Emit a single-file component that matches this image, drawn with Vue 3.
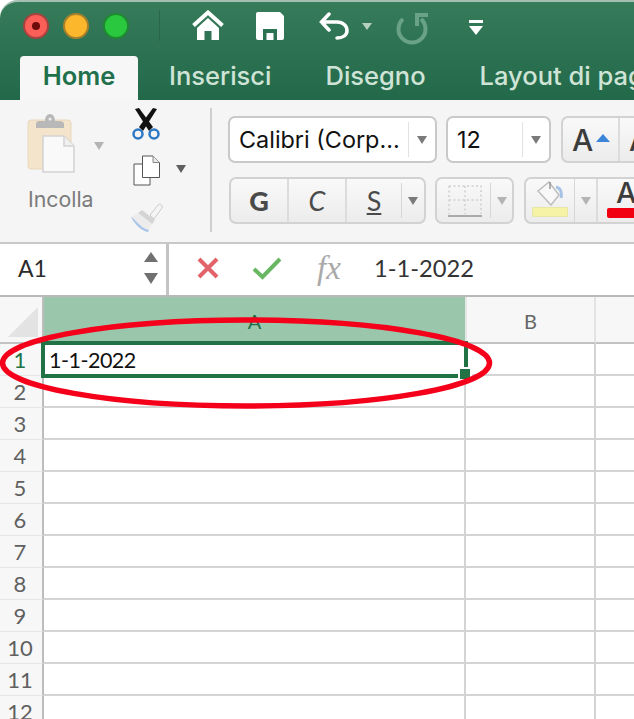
<script setup>
const rows = [1, 2, 3, 4, 5, 6, 7, 8, 9, 10, 11, 12]
</script>

<template>
  <div class="app">
    <header class="titlebar">
      <div class="quick">
        <span class="light red"><i></i></span>
        <span class="light yellow"></span>
        <span class="light green"></span>
        <span class="qsep"></span>
        <svg class="q-home" width="32" height="30" viewBox="0 0 32 30">
          <path d="M1.5 15.500 16 2.500 30.500 15.500" fill="none" stroke="#fff" stroke-width="4" />
          <path d="M5 18 16 8 27 18V30H19.500V21H12.500V30H5Z" fill="#fff" />
        </svg>
        <svg class="q-save" width="28" height="28" viewBox="0 0 28 28">
          <path d="M2 0H24L28 4V26a2 2 0 0 1-2 2H2a2 2 0 0 1-2-2V2a2 2 0 0 1 2-2Z" fill="#fff" />
          <rect x="7" y="17" width="14" height="11" fill="#2b7350" />
          <rect x="10.500" y="21" width="7" height="7" fill="#fff" />
        </svg>
        <svg class="q-undo" width="31" height="29" viewBox="0 0 31 29">
          <path d="M10 2 2.500 10 10 18M2.500 10H18C24 10 28 14 28 18.500 28 23 24 26 18 26" fill="none" stroke="#fff" stroke-width="3.500" stroke-linecap="round" />
        </svg>
        <span class="q-caret"></span>
        <svg class="q-redo" width="36" height="34" viewBox="0 0 36 34">
          <path d="M7 8A13.500 13.500 0 1 0 25 8" fill="none" stroke="#69a286" stroke-width="4" />
          <path d="M32 4H21V15" fill="none" stroke="#69a286" stroke-width="4" />
        </svg>
        <svg class="q-more" width="14" height="15" viewBox="0 0 14 15">
          <rect width="14" height="3" fill="#fff" />
          <path d="M0 6H14L7 15Z" fill="#fff" />
        </svg>
      </div>
      <nav class="tabs">
        <span class="tab active">Home</span>
        <span class="tab t2">Inserisci</span>
        <span class="tab t3">Disegno</span>
        <span class="tab t4">Layout di pagina</span>
      </nav>
    </header>

    <section class="ribbon">
      <div class="paste">
        <div class="paste-top">
          <svg width="50" height="60" viewBox="0 0 50 60">
            <rect x="1" y="7" width="43" height="49" rx="3" fill="#f4e4cb" stroke="#e8d8bd" />
            <path d="M9 15V11C9 8 12 8 14 8H18C18 4 20 1 23 1S28 4 28 8H32C35 8 37 9 37 11V15Z" fill="#b8b8b8" />
            <circle cx="23" cy="6" r="1.500" fill="#eee" />
            <path d="M16 23H37L47 33V59H16Z" fill="#f9f9f9" stroke="#d2d2d2" stroke-width="1.500" />
            <path d="M37 23V33H47" fill="#f0f0f0" stroke="#d2d2d2" stroke-width="1.500" />
          </svg>
          <span class="caret light-caret paste-caret"></span>
        </div>
        <span class="paste-label">Incolla</span>
      </div>

      <div class="tools">
        <svg class="scissors" width="32" height="34" viewBox="0 0 32 34">
          <path d="M5 1 9 0 23 19 19 23Z" fill="#111" />
          <path d="M27 1 23 0 9 19 13 23Z" fill="#111" />
          <circle cx="8" cy="26" r="4.500" fill="none" stroke="#2f78c4" stroke-width="2.500" />
          <circle cx="24" cy="26" r="4.500" fill="none" stroke="#2f78c4" stroke-width="2.500" />
        </svg>
        <div class="copy-row">
          <svg width="28" height="31" viewBox="0 0 28 31">
            <path d="M1 9H17V30H1Z" fill="#fff" stroke="#555" stroke-width="1" />
            <path d="M9.500 1H20L26.500 7.500V22.500H9.500Z" fill="#fff" stroke="#555" stroke-width="1" />
            <path d="M20 1V7.500H26.500" fill="#e8e8e8" stroke="#888" stroke-width="1" />
          </svg>
          <span class="caret dark-caret"></span>
        </div>
        <svg class="brush" width="34" height="32" viewBox="0 0 34 32">
          <path d="M20 13 28 3C30 1 33 3 32 6L24 17Z" fill="#f4f4f4" stroke="#ccc" />
          <path d="M12 8 25 18 22 22 8 11Z" fill="#d4d4d4" />
          <path d="M8 11 22 22 18 30C12 28 5 22 1 15Z" fill="#ececec" />
          <path d="M4 17C9 23 14 27 19 28L18 30C12 29 5 23 1 15Z" fill="#a9c6ea" />
        </svg>
      </div>

      <div class="rsep"></div>

      <div class="font-group">
        <div class="frow">
          <div class="combo font-combo">
            <span class="combo-text">Calibri (Corp...</span>
            <span class="combo-arrow"><span class="caret mid-caret"></span></span>
          </div>
          <div class="combo size-combo">
            <span class="combo-text">12</span>
            <span class="combo-arrow"><span class="caret mid-caret"></span></span>
          </div>
          <div class="btns grow">
            <span class="b-a"><span class="big-a">A</span><span class="up"></span></span>
            <span class="b-a"><span class="big-a">A</span></span>
          </div>
        </div>
        <div class="frow row2">
          <div class="btns gcs">
            <span class="b-l g">G</span>
            <span class="b-l c">C</span>
            <span class="b-l s"><u>S</u></span>
            <span class="b-c"><span class="caret mid-caret"></span></span>
          </div>
          <div class="btns borders">
            <span class="b-icon">
              <svg width="36" height="34" viewBox="0 0 36 34">
                <path d="M2 2H34V30M2 2V30M18 2V30M2 16H34" fill="none" stroke="#d0d0d0" stroke-width="1.500" stroke-dasharray="2 2.500" />
                <path d="M1 32H35" stroke="#aaa" stroke-width="2" />
              </svg>
            </span>
            <span class="b-c"><span class="caret light-caret"></span></span>
          </div>
          <div class="btns fill">
            <span class="b-fill">
              <svg width="26" height="26" viewBox="0 0 26 26">
                <path d="M1 11 12 2 22 15 14 25Z" fill="#f8f8f8" stroke="#bdbdbd" stroke-width="1.500" />
                <path d="M13 9V2" stroke="#999" stroke-width="1.500" />
                <path d="M19 7C24 8 25 13 24 18" fill="none" stroke="#a6c3e6" stroke-width="3" />
              </svg>
              <span class="swatch"></span>
            </span>
            <span class="b-c fc"><span class="caret light-caret"></span></span>
            <span class="b-color"><span class="color-a">A</span><span class="redbar"></span></span>
          </div>
        </div>
      </div>
    </section>

    <section class="formula">
      <div class="namebox">
        <span class="name">A1</span>
        <span class="spin">
          <span class="sp-up"></span>
          <span class="sp-down"></span>
        </span>
      </div>
      <div class="fbar">
        <svg width="24" height="24" viewBox="0 0 24 24">
          <path d="M3 3 21 21M21 3 3 21" stroke="#e06469" stroke-width="4" />
        </svg>
        <svg class="ok" width="30" height="24" viewBox="0 0 30 24">
          <path d="M2 13 10.500 21 28 3" fill="none" stroke="#6ab763" stroke-width="4" />
        </svg>
        <span class="fx">fx</span>
        <span class="fval">1-1-2022</span>
      </div>
    </section>

    <section class="sheet">
      <div class="hrow">
        <div class="corner">
          <svg width="42" height="44" viewBox="0 0 42 44">
            <path d="M8 40 38 10V40Z" fill="#e3e3e3" />
          </svg>
        </div>
        <div class="col-a">A</div>
        <div class="col-b">B</div>
        <div class="col-c"></div>
      </div>
      <div v-for="r in rows" :key="r" class="row">
        <div class="rh" :class="{ sel: r === 1 }">{{ r }}</div>
        <div class="ca">
          <template v-if="r === 1">
            <span class="cell-text">1-1-2022</span>
            <span class="selection"><i class="handle"></i></span>
          </template>
        </div>
        <div class="cb"></div>
        <div class="cc"></div>
      </div>
      <svg class="mark" width="500" height="100" viewBox="0 0 500 100">
        <ellipse cx="246" cy="50" rx="243.500" ry="43" fill="none" stroke="#f5001a" stroke-width="5.500" />
      </svg>
    </section>
  </div>
</template>

<style scoped>
.app {
  width: 634px;
  height: 719px;
  overflow: hidden;
  background: #fff;
  font-family: Inter, "Liberation Sans", sans-serif;
  position: relative;
}
.titlebar {
  height: 100px;
  box-sizing: border-box;
  border-top: 2px solid #a5c0b0;
  border-top-left-radius: 18px;
  background: linear-gradient(#367b5a, #22694a);
  display: flex;
  flex-direction: column;
}
.quick {
  display: flex;
  align-items: flex-start;
  height: 54px;
  padding-left: 23px;
  flex: none;
}
.quick > * { flex: none; }
.light {
  width: 26px;
  height: 26px;
  border-radius: 50%;
  box-sizing: border-box;
  margin-top: 11px;
  margin-right: 14px;
  display: flex;
  align-items: center;
  justify-content: center;
}
.red { background: #fb5f57; border: 2px solid #a8423f; }
.red i { width: 8px; height: 8px; border-radius: 50%; background: #6e0c0c; }
.yellow { background: #fdb72c; border: 2px solid #a9812c; }
.green { background: #29c83f; border: 2px solid #1e8a31; }
.qsep {
  width: 1px;
  height: 31px;
  margin-top: 8px;
  margin-left: 16px;
  background: #2a6647;
}
.q-home { margin-left: 32px; margin-top: 8px; }
.q-save { margin-left: 32px; margin-top: 10px; }
.q-undo { margin-left: 35px; margin-top: 10px; }
.q-caret {
  width: 0;
  height: 0;
  margin-left: 12px;
  margin-top: 21px;
  border-left: 5px solid transparent;
  border-right: 5px solid transparent;
  border-top: 7px solid #b5d0bf;
}
.q-redo { margin-left: 24px; margin-top: 9px; }
.q-more { margin-left: 37px; margin-top: 18px; }
.tabs {
  display: flex;
  align-items: stretch;
  height: 44px;
  white-space: nowrap;
  padding-left: 20px;
}
.tab {
  flex: none;
  font-size: 25.500px;
  font-weight: 500;
  color: #cfe4d6;
  padding-top: 6px;
  line-height: 28px;
}
.tab.active {
  width: 118px;
  box-sizing: border-box;
  text-align: center;
  background: #f7f7f7;
  color: #21704c;
  border-radius: 4px 4px 0 0;
  font-weight: 600;
}
.t2 { margin-left: 31px; }
.t3 { margin-left: 54px; }
.t4 { margin-left: 54px; }

.ribbon {
  height: 142px;
  box-sizing: border-box;
  background: #f5f5f5;
  display: flex;
  align-items: flex-start;
  padding-left: 27px;
}
.ribbon > * { flex: none; }
.paste {
  width: 103px;
  padding-top: 13px;
  display: flex;
  flex-direction: column;
}
.paste-top { display: flex; }
.paste-caret { margin-left: 17px; margin-top: 29px; }
.paste-label {
  font-size: 21.300px;
  color: #7b7b7b;
  margin-top: 12px;
  margin-left: 1px;
  line-height: 28px;
  font-weight: 400;
}
.caret {
  width: 0;
  height: 0;
  display: block;
  border-left: 5px solid transparent;
  border-right: 5px solid transparent;
  border-top: 8px solid #777;
}
.light-caret { border-top-color: #b4b4b4; }
.dark-caret { border-top-color: #5f5f5f; }
.mid-caret { border-top-color: #7a7a7a; }
.tools {
  width: 80px;
  display: flex;
  flex-direction: column;
  padding-top: 8px;
}
.copy-row {
  display: flex;
  align-items: center;
  margin-top: 13px;
  margin-left: 3px;
}
.copy-row .caret { margin-left: 15px; margin-top: -4px; }
.brush { margin-top: 16px; }
.rsep {
  width: 2px;
  height: 124px;
  margin-top: 8px;
  background: #cfcfcf;
}
.font-group {
  margin-left: 16px;
  padding-top: 16px;
  display: flex;
  flex-direction: column;
}
.frow { display: flex; height: 47px; }
.frow > * { flex: none; }
.row2 { margin-top: 14px; }
.combo {
  display: flex;
  height: 47px;
  box-sizing: border-box;
  background: #fff;
  border: 2px solid #c9c9c9;
  border-radius: 7px;
  align-items: center;
}
.font-combo { width: 209px; }
.size-combo { width: 105px; margin-left: 9px; }
.combo-text {
  flex: 1;
  padding-left: 9px;
  font-size: 23.400px;
  color: #111;
  white-space: nowrap;
  overflow: hidden;
}
.combo-arrow {
  width: 26px;
  height: 35px;
  flex: none;
  border-left: 1px solid #e2e2e2;
  display: flex;
  align-items: center;
  justify-content: center;
}
.btns {
  display: flex;
  height: 47px;
  box-sizing: border-box;
  border: 2px solid #d2d2d2;
  border-radius: 7px;
  background: linear-gradient(#f9f9f9, #ececec);
  font-family: Lato, "Liberation Sans", sans-serif;
}
.grow { margin-left: 10px; width: 120px; border-right: 0; }
.b-a {
  width: 57px;
  flex: none;
  display: flex;
  align-items: center;
  padding-left: 9px;
  box-sizing: border-box;
  border-right: 2px solid #dcdcdc;
}
.big-a {
  font-family: Inter, sans-serif;
  font-weight: 500;
  font-size: 30px;
  color: #3c3c3c;
}
.up {
  margin-left: 3px;
  margin-top: -3px;
  width: 0;
  height: 0;
  border-left: 7px solid transparent;
  border-right: 7px solid transparent;
  border-bottom: 8px solid #3b86d8;
}
.gcs { width: 197px; margin-left: 1px; }
.b-l {
  width: 58px;
  flex: none;
  box-sizing: border-box;
  border-right: 2px solid #dcdcdc;
  display: flex;
  align-items: center;
  justify-content: center;
  font-size: 27px;
  color: #4a4a4a;
}
.b-l.s { border-right: 0; width: 54px; font-weight: 400; }
.g { font-weight: 900; }
.c { font-style: italic; font-weight: 400; }
.b-c {
  flex: 1;
  height: 35px;
  align-self: center;
  border-left: 1px solid #d6d6d6;
  display: flex;
  align-items: center;
  justify-content: center;
}
.borders { width: 79px; margin-left: 9px; }
.b-icon {
  width: 53px;
  flex: none;
  display: flex;
  align-items: center;
  padding-left: 10px;
  box-sizing: border-box;
}
.fill {
  margin-left: 10px;
  width: 130px;
  border-right: 0;
}
.b-fill {
  width: 48px;
  flex: none;
  display: flex;
  flex-direction: column;
  align-items: center;
  padding-top: 1px;
}
.swatch {
  width: 36px;
  height: 10px;
  margin-top: 1px;
  background: #f6f3a7;
  border: 1px solid #e7e6a5;
  box-sizing: border-box;
  border-radius: 1px;
}
.fc { flex: none; width: 24px; border-right: 2px solid #dcdcdc; height: 43px; box-sizing: border-box; }
.b-color {
  flex: 1;
  display: flex;
  flex-direction: column;
  align-items: flex-start;
  padding-left: 9px;
  overflow: hidden;
}
.color-a {
  font-family: Inter, sans-serif;
  font-weight: 500;
  font-size: 29px;
  line-height: 28px;
  color: #3c3c3c;
  margin-left: 9px;
}
.redbar {
  width: 40px;
  height: 10px;
  margin-top: 1px;
  background: #f00010;
  border-radius: 2px;
}

.formula {
  height: 55px;
  box-sizing: border-box;
  background: #fff;
  display: flex;
  border-top: 2px solid #c8c8c8;
  border-bottom: 2px solid #b9b9b9;
  font-family: Lato, "Liberation Sans", sans-serif;
}
.namebox {
  width: 169px;
  flex: none;
  box-sizing: border-box;
  border-right: 3px solid #c4c4c4;
  display: flex;
  align-items: center;
  padding-left: 18px;
  padding-bottom: 3px;
}
.name { font-size: 23px; color: #2b2b2b; flex: 1; }
.spin {
  display: flex;
  flex-direction: column;
  gap: 11px;
  margin-right: 8px;
}
.sp-up, .sp-down {
  width: 0;
  height: 0;
  border-left: 7px solid transparent;
  border-right: 7px solid transparent;
}
.sp-up { border-bottom: 10px solid #707070; }
.sp-down { border-top: 11px solid #707070; }
.fbar {
  flex: 1;
  display: flex;
  align-items: center;
  padding-left: 27px;
  padding-bottom: 3px;
}
.ok { margin-left: 32px; }
.fx {
  margin-left: 35px;
  width: 57px;
  flex: none;
  font-family: "Liberation Serif", serif;
  font-style: italic;
  font-size: 33px;
  color: #a9a9a9;
}
.fval { font-size: 23.700px; color: #333; white-space: nowrap; }

.sheet { position: relative; font-family: Lato, "Liberation Sans", sans-serif; }
.hrow { display: flex; height: 47px; }
.corner {
  width: 44px;
  flex: none;
  box-sizing: border-box;
  background: #f7f7f7;
  border-right: 2px solid #bdbdbd;
  border-bottom: 2px solid #c2c2c2;
}
.corner svg { display: block; }
.col-a, .col-b, .col-c {
  box-sizing: border-box;
  border-bottom: 2px solid #c2c2c2;
  display: flex;
  align-items: center;
  justify-content: center;
  font-size: 20px;
  padding-top: 3px;
}
.col-a {
  width: 421px;
  flex: none;
  background: #9ac7ac;
  color: #1f6e48;
}
.col-b {
  width: 131px;
  flex: none;
  background: #f7f7f7;
  color: #666;
  border-right: 2px solid #e3e3e3;
  border-left: 2px solid #e6e6e6;
}
.col-c { flex: 1; background: #f7f7f7; }
.row { display: flex; height: 32px; }
.rh {
  width: 44px;
  flex: none;
  box-sizing: border-box;
  background: #f7f7f7;
  border-right: 2px solid #bdbdbd;
  border-bottom: 1px solid #e6e6e6;
  text-align: center;
  font-size: 22px;
  line-height: 32px;
  color: #606060;
  padding-right: 2px;
}
.rh.sel { color: #217346; }
.ca, .cb, .cc {
  box-sizing: border-box;
  border-bottom: 2px solid #d4d4d4;
  border-right: 2px solid #d4d4d4;
}
.ca { width: 422px; flex: none; position: relative; }
.cb { width: 130px; flex: none; }
.cc { flex: 1; border-right: 0; }
.cell-text {
  position: absolute;
  left: 5px;
  top: 0;
  font-size: 21.500px;
  letter-spacing: -0.500px;
  line-height: 32px;
  color: #111;
}
.selection {
  position: absolute;
  left: -3px;
  top: -3px;
  width: 427px;
  height: 37px;
  box-sizing: border-box;
  border: 4px solid #217346;
  z-index: 2;
}
.handle {
  position: absolute;
  right: -6px;
  bottom: -5px;
  width: 10px;
  height: 10px;
  background: #217346;
  outline: 2px solid #fff;
}
.mark {
  position: absolute;
  left: 0;
  top: 16px;
  z-index: 3;
  pointer-events: none;
}
</style>

<style>
html, body { margin: 0; background: #fff; }
</style>
